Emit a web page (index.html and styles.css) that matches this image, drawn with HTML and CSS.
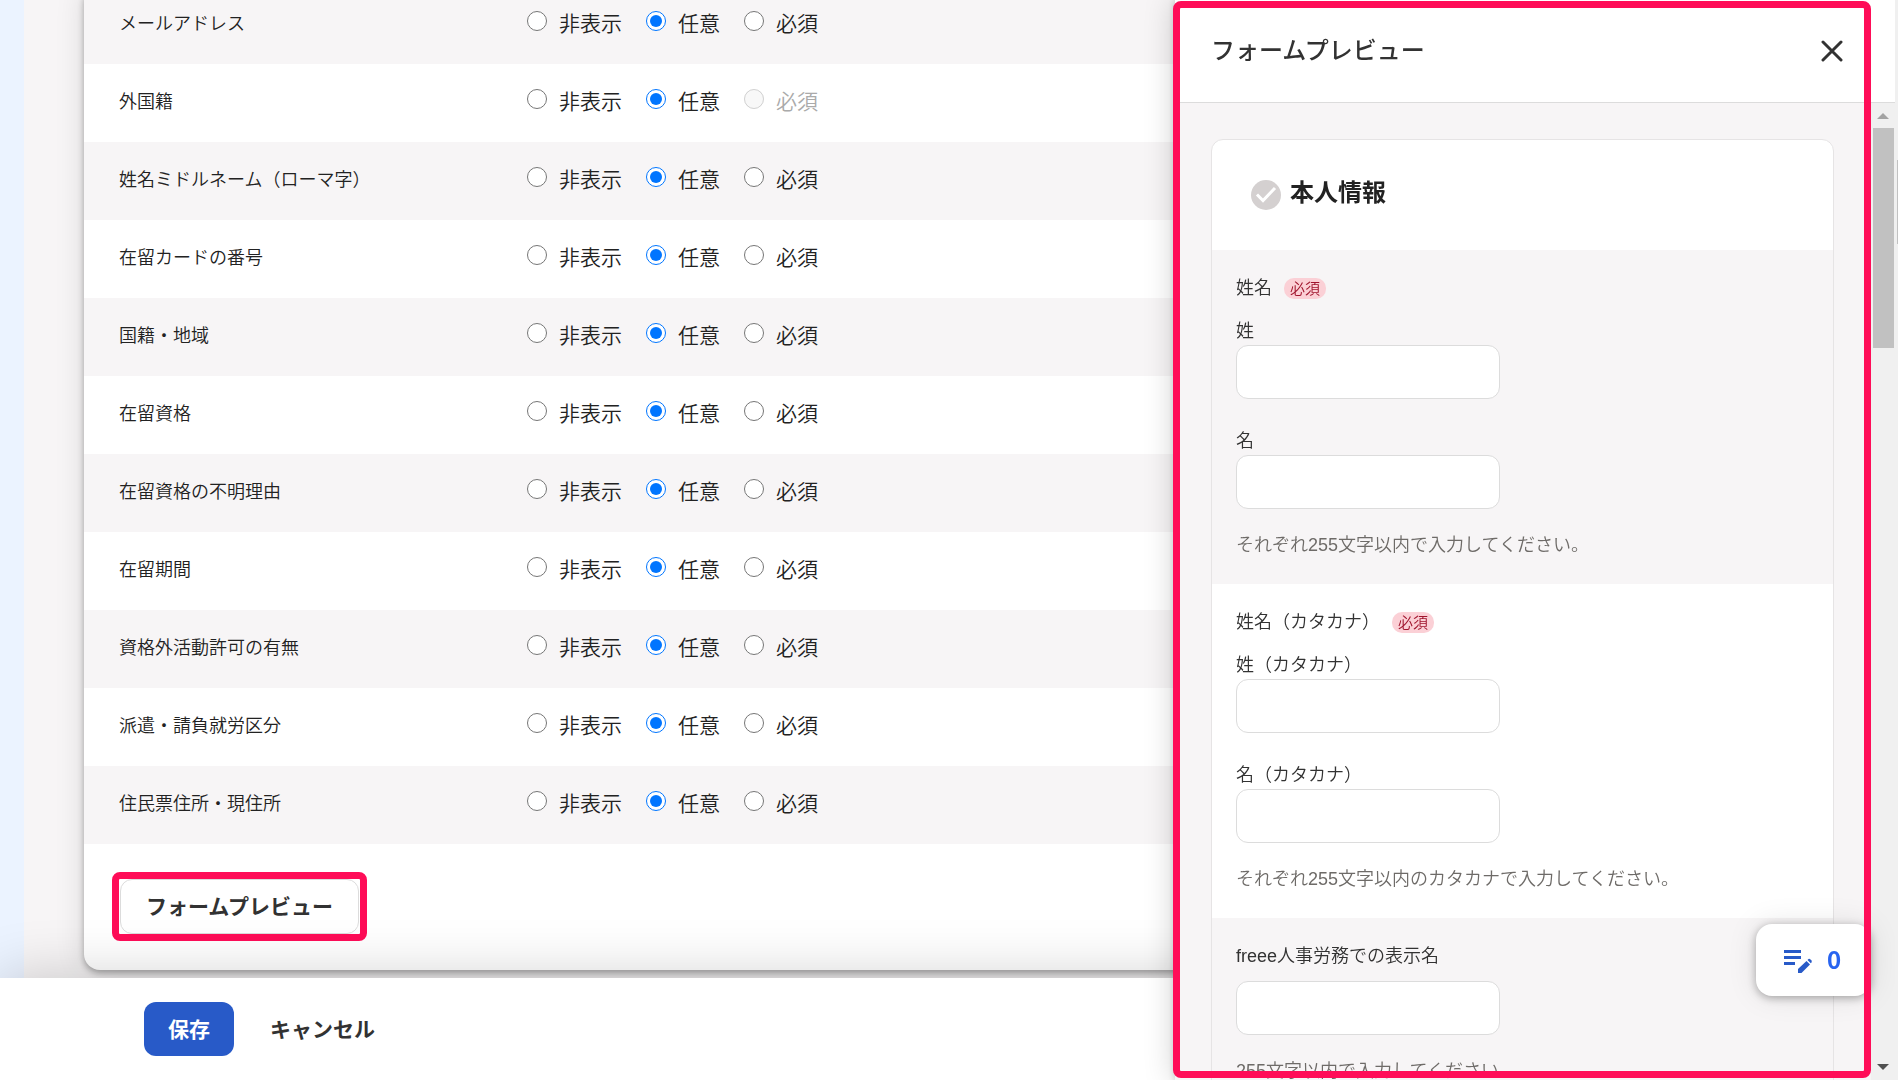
FILE: index.html
```html
<!DOCTYPE html>
<html lang="ja">
<head>
    <meta charset="UTF-8">
    <meta name="viewport" content="width=device-width, initial-scale=1.0">
    <title>フォームプレビュー</title>
    <link rel="stylesheet" href="styles.css">
</head>
<body>
    <div class="page">
        <div class="content">
            <div class="side"></div>
            <main class="main">
                <form class="card" id="settings">
                    <table class="items">
                        <tbody id="items"></tbody>
                    </table>
                    <div class="card-actions">
                        <div class="highlight">
                            <button type="button" class="btn btn-outline">フォームプレビュー</button>
                        </div>
                    </div>
                </form>
            </main>
        </div>
        <footer class="footer">
            <button type="submit" form="settings" class="btn btn-primary">保存</button>
            <button type="button" class="btn btn-text">キャンセル</button>
        </footer>
    </div>

    <aside class="panel">
        <header class="panel-header">
            <h2>フォームプレビュー</h2>
            <button type="button" class="close" aria-label="閉じる">
                <svg width="22" height="22" viewBox="0 0 22 22"><path d="M2 2L20 20M20 2L2 20" fill="none" stroke="#323232" stroke-width="3" stroke-linecap="round"/></svg>
            </button>
        </header>
        <div class="panel-body">
            <div class="panel-content">
                <section class="preview">
                    <div class="preview-title">
                        <svg width="30" height="30" viewBox="0 0 30 30"><circle cx="15" cy="15" r="15" fill="#d4d0d0"/><path d="M6 14.500L12 20.500L24 8" fill="none" stroke="#fff" stroke-width="3"/></svg>
                        <h3>本人情報</h3>
                    </div>
                    <fieldset class="group">
                        <legend class="group-label">姓名<span class="badge">必須</span></legend>
                        <div class="field">
                            <label for="last_name">姓</label>
                            <input type="text" id="last_name">
                        </div>
                        <div class="field">
                            <label for="first_name">名</label>
                            <input type="text" id="first_name">
                        </div>
                        <p class="help">それぞれ255文字以内で入力してください。</p>
                    </fieldset>
                    <fieldset class="group">
                        <legend class="group-label">姓名（カタカナ）<span class="badge">必須</span></legend>
                        <div class="field">
                            <label for="last_name_kana">姓（カタカナ）</label>
                            <input type="text" id="last_name_kana">
                        </div>
                        <div class="field">
                            <label for="first_name_kana">名（カタカナ）</label>
                            <input type="text" id="first_name_kana">
                        </div>
                        <p class="help">それぞれ255文字以内のカタカナで入力してください。</p>
                    </fieldset>
                    <div class="group">
                        <label class="group-label group-label-single" for="display_name">freee人事労務での表示名</label>
                        <div class="field">
                            <input type="text" id="display_name">
                        </div>
                        <p class="help">255文字以内で入力してください。</p>
                    </div>
                </section>
            </div>
            <div class="scrollbar">
                <svg width="12" height="6" viewBox="0 0 12 6"><path d="M0 6L6 0L12 6Z" fill="#a3a3a3"/></svg>
                <div class="thumb"></div>
                <svg width="12" height="6" viewBox="0 0 12 6"><path d="M0 0L12 0L6 6Z" fill="#505050"/></svg>
            </div>
        </div>
        <button type="button" class="memo">
            <svg width="28" height="24" viewBox="0 0 28 24" fill="#285ac8"><path d="M0 0H17V3H0ZM0 6H17V9H0ZM0 12H11V15H0Z"/><path d="M14 19L22.500 11L26 14.500L17.500 23H14Z"/><path d="M23.500 10L24.500 9Q25.500 8.500 26.500 9.500L27.500 10.500Q28 11.500 27.500 12.500L26.800 13.200Z"/></svg>
            <span>0</span>
        </button>
        <div class="panel-highlight"></div>
    </aside>
    <div class="page-scrollbar"><div class="page-thumb"></div></div>

    <script>
        const items = [
            {label: 'メールアドレス'},
            {label: '外国籍', requiredDisabled: true},
            {label: '姓名ミドルネーム（ローマ字）'},
            {label: '在留カードの番号'},
            {label: '国籍・地域'},
            {label: '在留資格'},
            {label: '在留資格の不明理由'},
            {label: '在留期間'},
            {label: '資格外活動許可の有無'},
            {label: '派遣・請負就労区分'},
            {label: '住民票住所・現住所'}
        ];
        const options = ['非表示', '任意', '必須'];

        items.forEach((item, i) => {
            const tr = document.createElement('tr');
            const radios = options.map((option, n) => {
                const disabled = item.requiredDisabled && n === 2 ? 'disabled' : '';
                const checked = n === 1 ? 'checked' : '';
                return `<label class="radio ${disabled}"><input type="radio" name="item_${i}" ${checked} ${disabled}>${option}</label>`;
            }).join('');
            tr.innerHTML = `<th scope="row">${item.label}</th><td><div class="radios">${radios}</div></td>`;
            document.getElementById('items').appendChild(tr);
        });
    </script>
</body>
</html>
```

FILE: styles.css
```css
* {
    box-sizing: border-box;
}

body {
    margin: 0;
    font-family: "Liberation Sans", "Noto Sans CJK JP", sans-serif;
    font-size: 18px;
    line-height: 27px;
    color: #323232;
    overflow: hidden;
}

h2, h3, p {
    margin: 0;
}

button, input {
    font-family: inherit;
}

svg {
    display: block;
    flex-shrink: 0;
}

.page {
    display: flex;
    flex-direction: column;
    height: 100vh;
}

.content {
    flex: 1;
    min-height: 0;
    display: flex;
    background-color: #f7f5f6;
}

.side {
    width: 24px;
    background-color: #ebf3ff;
}

.main {
    flex: 1;
    display: flex;
    flex-direction: column;
    justify-content: flex-end;
    overflow: hidden;
    padding: 0 60px 8px;
}

.card {
    flex-shrink: 0;
    background-color: white;
    border-radius: 16px;
    box-shadow: 0 0 30px rgba(0,0,0,0.12), 0 3px 6px rgba(0,0,0,0.3);
}

.items {
    width: 100%;
    border-collapse: collapse;
}

.items tr {
    height: 78px;
}

.items tr:nth-child(odd) {
    background-color: #f7f5f6;
}

.items th {
    width: 443px;
    padding: 0 0 2px 35px;
    text-align: left;
    font-weight: 350;
    color: #222;
}

.items td {
    padding: 0 0 4px;
    color: #222;
}

.radios {
    display: flex;
    gap: 24px;
}

.radio {
    display: flex;
    align-items: center;
    gap: 12px;
    font-size: 21px;
    font-weight: 350;
}

.radio input {
    width: 20px;
    height: 20px;
    margin: 0 0 4px;
}

.radio.disabled {
    color: #aaa;
}

.card-actions {
    display: flex;
    padding: 28px 28px 29px;
}

.highlight {
    border: 7px solid #ff0d58;
    border-radius: 8px;
    padding: 0 1px;
}

.btn {
    height: 54px;
    padding: 0 24px 3px;
    border: none;
    border-radius: 12px;
    background-color: white;
    color: #323232;
    font-size: 21px;
    font-weight: bold;
    cursor: pointer;
}

.btn-outline {
    height: 55px;
    padding: 0 25px 3px;
    border: 1px solid #dcdcdc;
}

.btn-primary {
    background-color: #285ac8;
    color: white;
}

.footer {
    position: relative;
    display: flex;
    align-items: center;
    gap: 12px;
    height: 102px;
    padding: 0 144px;
    background-color: white;
    box-shadow: 0 0 60px rgba(0,0,0,0.2);
}

/* プレビューパネル */
.panel {
    position: fixed;
    top: 0;
    right: 3px;
    bottom: 0;
    width: 720px;
    display: flex;
    flex-direction: column;
    background-color: white;
    box-shadow: 0 0 30px rgba(0,0,0,0.2), 0 0 8px rgba(0,0,0,0.2);
}

.panel-header {
    display: flex;
    align-items: center;
    justify-content: space-between;
    height: 103px;
    padding: 0 48px 0 36px;
    border-bottom: 1px solid #dcdcdc;
}

.panel-header h2 {
    padding-bottom: 2px;
    font-size: 24px;
    font-weight: 500;
}

.close {
    padding: 4px;
    border: none;
    background: none;
    cursor: pointer;
}

.panel-body {
    flex: 1;
    min-height: 0;
    display: flex;
}

.panel-content {
    flex: 1;
    overflow: hidden;
    padding: 36px 37px 36px 36px;
    background-color: #f7f5f6;
}

.preview {
    border: 1px solid #e6e4e5;
    border-radius: 12px;
    background-color: white;
    overflow: hidden;
}

.preview-title {
    display: flex;
    align-items: center;
    gap: 9px;
    height: 110px;
    padding: 0 39px;
}

.preview-title h3 {
    padding-bottom: 6px;
    font-size: 24px;
    color: #222;
}

.group {
    min-width: 0;
    min-height: 334px;
    margin: 0;
    padding: 25px 24px;
    border: none;
    font-weight: 350;
}

.group:nth-child(even) {
    background-color: #f7f5f6;
}

.group-label {
    float: left;
    display: flex;
    align-items: center;
    gap: 12px;
    width: 100%;
    padding: 0;
    margin-bottom: 16px;
}

.group-label-single {
    margin-bottom: 11px;
}

.badge {
    border-radius: 10px;
    padding: 0 6px;
    background-color: #fbd0d6;
    color: #a0142d;
    font-size: 15px;
    line-height: 21px;
}

.field {
    clear: both;
    display: flex;
    flex-direction: column;
    align-items: flex-start;
    margin-bottom: 29px;
}

.field input {
    width: 264px;
    height: 54px;
    padding: 0 12px;
    border: 1px solid #dcdcdc;
    border-radius: 12px;
    background-color: white;
    font-size: 18px;
}

.help {
    margin-top: -6px;
    color: #6e6b68;
}

.scrollbar {
    display: flex;
    flex-direction: column;
    align-items: center;
    width: 24px;
    padding: 10px 0;
    background-color: #f0f0f0;
}

.thumb {
    width: 21px;
    height: 220px;
    margin: 9px 0 auto;
    background-color: #c1c1c1;
}

.memo {
    position: absolute;
    right: 24px;
    bottom: 84px;
    display: flex;
    align-items: center;
    gap: 15px;
    width: 115px;
    height: 72px;
    padding: 0 28px;
    border: none;
    border-radius: 16px;
    background-color: white;
    box-shadow: 0 0 30px rgba(0,0,0,0.1), 0 2px 8px rgba(0,0,0,0.3);
    color: #2864f0;
    font-family: "Noto Sans CJK JP", sans-serif;
    font-size: 24px;
    font-weight: bold;
    cursor: pointer;
}

.memo svg {
    margin-top: 4px;
}

.memo span {
    padding-bottom: 4px;
}

.panel-highlight {
    position: absolute;
    top: 1px;
    right: 24px;
    bottom: 2px;
    left: -2px;
    border: 7px solid #ff0d58;
    border-radius: 8px;
    pointer-events: none;
}

.page-scrollbar {
    position: fixed;
    top: 0;
    right: 0;
    bottom: 0;
    width: 3px;
    padding: 160px 0 0 2px;
    background-color: #f0f0f0;
}

.page-thumb {
    height: 84px;
    background-color: #c1c1c1;
}
```
